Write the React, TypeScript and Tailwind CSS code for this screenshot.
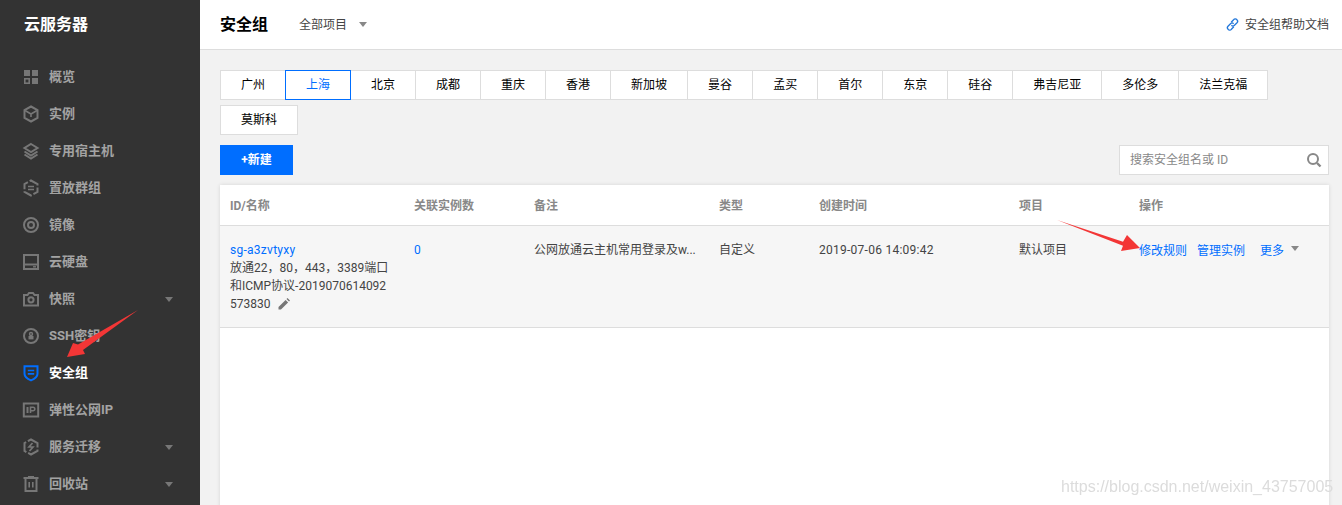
import React from "react";

const font = { fontFamily: '"Roboto","Noto Sans CJK SC",sans-serif' };

const G = ({ children }: { children: React.ReactNode }) => (
  <svg width="20" height="20" viewBox="0 0 20 20" fill="none" stroke="#777" strokeWidth="2">{children}</svg>
);

const icons: Record<string, React.ReactNode> = {
  grid: (
    <G>
      <rect x="3" y="3" width="6" height="6" fill="#777" stroke="none" />
      <rect x="11" y="3" width="6" height="6" fill="#777" stroke="none" />
      <rect x="3.8" y="11.8" width="4.4" height="4.4" strokeWidth="1.6" />
      <rect x="11" y="11" width="6" height="6" fill="#777" stroke="none" />
    </G>
  ),
  box: (
    <G>
      <path d="M10 2.5 16.5 6v8L10 17.5 3.5 14V6z" />
      <path d="M4 6.5 10 10l6-3.5M10 10v3" strokeWidth="1.6" />
    </G>
  ),
  layers: (
    <G>
      <path d="M10 3 16.5 7 10 11 3.5 7z" />
      <path d="M3.5 10.5 10 14.5l6.5-4M3.5 13.5 10 17.5l6.5-4" />
    </G>
  ),
  place: (
    <G>
      <path d="M10 2.5 16.5 6v8L10 17.5 3.5 14V6z" strokeDasharray="9 2" />
      <path d="M7 8.5h6M7 11.5h6" strokeWidth="1.6" />
    </G>
  ),
  disc: (
    <G>
      <circle cx="10" cy="10" r="7" />
      <circle cx="10" cy="10" r="3" />
    </G>
  ),
  disk: (
    <G>
      <rect x="3" y="3" width="14" height="14" />
      <path d="M3 12.5h14" />
      <path d="M12 14.8h3" strokeWidth="1.4" />
    </G>
  ),
  camera: (
    <G>
      <path d="M3 6h3.5L8 4h4l1.5 2H17v10.5H3z" />
      <circle cx="10" cy="10.8" r="2.6" />
    </G>
  ),
  key: (
    <G>
      <circle cx="10" cy="10" r="7" />
      <circle cx="10" cy="8" r="1.5" strokeWidth="1.4" />
      <rect x="7.5" y="10" width="5" height="3.4" fill="#777" stroke="none" />
    </G>
  ),
  shield: (
    <svg width="20" height="20" viewBox="0 0 20 20" fill="none" stroke="#006eff" strokeWidth="2">
      <path d="M3.5 3.2h13v7.6c0 3-3 5.2-6.5 6.6-3.5-1.4-6.5-3.6-6.5-6.6z" />
      <path d="M6.8 7.5h6.4M6.8 10.8h6.4" strokeWidth="1.7" />
    </svg>
  ),
  ip: (
    <G>
      <rect x="2.8" y="3.5" width="14.4" height="13" />
      <path d="M6.5 7v6" />
      <path d="M9.5 13V7.3h2.6a1.6 1.6 0 0 1 0 3.4H9.5" strokeWidth="1.6" />
    </G>
  ),
  migrate: (
    <G>
      <path d="M10 2.5 16.5 6v8L10 17.5 3.5 14V6z" strokeDasharray="12 2" />
      <path d="M11.5 6 8 10h4l-3.5 4" strokeWidth="1.7" />
    </G>
  ),
  trash: (
    <G>
      <path d="M2.5 4h15M7 3h6" />
      <path d="M4.5 4.5V17h11V4.500" />
      <path d="M8.2 8v5.500M11.800 8v5.500" strokeWidth="1.6" />
    </G>
  ),
};

const Caret = ({ className }: { className: string }) => (
  <span className={`w-0 h-0 border-x-[4px] border-x-transparent border-t-[5px] ${className}`} />
);

const nav = [
  { i: "grid", t: "概览" },
  { i: "box", t: "实例" },
  { i: "layers", t: "专用宿主机" },
  { i: "place", t: "置放群组" },
  { i: "disc", t: "镜像" },
  { i: "disk", t: "云硬盘" },
  { i: "camera", t: "快照", c: true },
  { i: "key", t: "SSH密钥" },
  { i: "shield", t: "安全组", a: true },
  { i: "ip", t: "弹性公网IP" },
  { i: "migrate", t: "服务迁移", c: true },
  { i: "trash", t: "回收站", c: true },
];

const regions = ["广州", "上海", "北京", "成都", "重庆", "香港", "新加坡", "曼谷", "孟买", "首尔", "东京", "硅谷", "弗吉尼亚", "多伦多", "法兰克福"];

export default function App() {
  return (
    <div className="relative flex w-[1342px] h-[505px] overflow-hidden bg-[#f2f2f2]" style={font}>
      <aside className="w-[200px] shrink-0 bg-[#333333]">
        <div className="h-[50px] pl-6 flex items-center text-base font-bold text-white">云服务器</div>
        <ul className="mt-[8.5px]">
          {nav.map((n) => (
            <li key={n.t} className="h-[37px] flex items-center pl-[21px] pr-[27px]">
              {icons[n.i]}
              <span className={`ml-2 text-[13px] font-bold ${n.a ? "text-white" : "text-[#a3a3a3]"}`}>{n.t}</span>
              {n.c && <Caret className="ml-auto border-t-[#777]" />}
            </li>
          ))}
        </ul>
      </aside>

      <main className="flex-1 min-w-0">
        <header className="h-[50px] bg-white border-b border-[#dddddd] pl-5 pr-[13px] flex items-center">
          <h1 className="text-base font-bold text-black">安全组</h1>
          <span className="ml-[31px] text-xs text-[#444]">全部项目</span>
          <Caret className="ml-[12px] border-t-[#888]" />
          <span className="ml-auto flex items-center gap-[5px] text-xs text-[#444]">
            <svg width="15" height="15" viewBox="0 0 15 15" fill="none" stroke="#2277da" strokeWidth="1.3">
              <path d="M6.2 5.2 8.600 2.700a2.100 2.100 0 0 1 3.300 0 2.200 2.200 0 0 1 .1 3.100L9.500 8.300a2.200 2.200 0 0 1-3.100 0" />
              <path d="M8.800 9.800 6.400 12.300a2.100 2.100 0 0 1-3.300 0 2.200 2.200 0 0 1-.1-3.100l2.500-2.500a2.200 2.200 0 0 1 3.100 0" />
            </svg>
            安全组帮助文档
          </span>
        </header>

        <div className="pl-5 pr-[13px] pt-5">
          <div className="flex flex-wrap gap-y-[5px] pl-px">
            {regions.map((r) => (
              <button
                key={r}
                className={`relative -ml-px h-[30px] px-5 bg-white border text-xs ${
                  r === "上海" ? "z-10 border-[#006eff] text-[#006eff]" : "border-[#dddddd] text-black"
                }`}
              >
                {r}
              </button>
            ))}
            <button className="h-[30px] w-[78px] -ml-px bg-white border border-[#dddddd] text-xs text-black">莫斯科</button>
          </div>

          <div className="mt-[10px] flex justify-between">
            <button className="w-[73px] h-[30px] bg-[#006eff] text-white text-xs font-bold">+新建</button>
            <div className="w-[210px] h-[30px] bg-white border border-[#dddddd] flex items-center pl-[10px] pr-[6px]">
              <span className="text-xs text-[#888]">搜索安全组名或 ID</span>
              <svg className="ml-auto" width="16" height="16" viewBox="0 0 16 16" fill="none" stroke="#888" strokeWidth="2">
                <circle cx="7" cy="7" r="5" />
                <path d="M11 11l3.500 3.500" strokeWidth="2.400" />
              </svg>
            </div>
          </div>

          <div className="mt-[10px] bg-white h-[400px] shadow-[0_0_4px_rgba(0,0,0,0.12)]">
            <div className="grid grid-cols-[184px_120px_185px_100px_200px_120px_1fr] h-[41px] pt-[2px] items-center border-b border-[#dddddd] text-xs font-bold text-[#888]">
              {["ID/名称", "关联实例数", "备注", "类型", "创建时间", "项目", "操作"].map((h) => (
                <div key={h} className="pl-[10px]">{h}</div>
              ))}
            </div>
            <div className="grid grid-cols-[184px_120px_185px_100px_200px_120px_1fr] h-[102px] pt-[15px] border-b border-[#dddddd] bg-[#f6f6f6] text-xs leading-[18px] text-[#444]">
              <div className="pl-[10px]">
                <div className="text-[#006eff] tracking-[0.27px]">sg-a3zvtyxy</div>
                <div>放通22，80，443，3389端口</div>
                <div>和ICMP协议-2019070614092</div>
                <div className="flex items-center">
                  573830
                  <svg className="ml-2" width="12" height="12" viewBox="0 0 12 12" fill="#777">
                    <path d="M0.500 11.500V9L7.600 1.900l2.500 2.500L3 11.500zM8.500 1l1-1 2.500 2.500-1 1z" />
                  </svg>
                </div>
              </div>
              <div className="pl-[10px] text-[#006eff]">0</div>
              <div className="pl-[10px]">公网放通云主机常用登录及w...</div>
              <div className="pl-[10px]">自定义</div>
              <div className="pl-[10px] tracking-[0.26px]">2019-07-06 14:09:42</div>
              <div className="pl-[10px]">默认项目</div>
              <div className="pl-[10px] pt-px flex items-start text-[#006eff]">
                <span>修改规则</span>
                <span className="ml-[10px]">管理实例</span>
                <span className="ml-[15px]">更多</span>
                <Caret className="ml-[7px] mt-[4px] border-t-[#888]" />
              </div>
            </div>
          </div>
        </div>
      </main>

      <svg className="absolute left-0 top-0 pointer-events-none" width="1342" height="505" viewBox="0 0 1342 505">
        <path d="M138 310 83 350 85 354 67 357 73 343 78 344.500Z" fill="#f33636" />
        <path d="M1057 220 1123 241.700 1127 235 1140 248 1121 251 1123 245.700Z" fill="#f33636" />
      </svg>
      <span className="absolute left-[1061px] top-[476px] text-[16px] leading-[22px] text-[#dcdcdc] blur-[0.5px]" style={{ fontFamily: '"Liberation Sans",sans-serif' }}>
        https://blog.csdn.net/weixin_43757005
      </span>
    </div>
  );
}
